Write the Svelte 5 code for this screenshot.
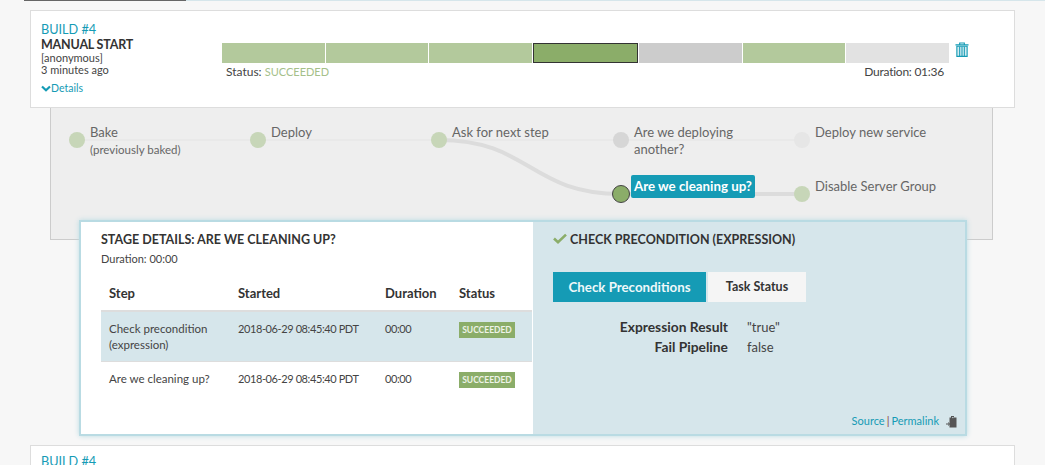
<script lang="ts">
  const segments = [
    { color: '#b3c99c' }, { color: '#b3c99c' }, { color: '#b3c99c' },
    { color: '#8bad69', active: true },
    { color: '#cccccc' }, { color: '#b3c99c' }, { color: '#e2e2e2' }
  ];

  // x/y are the node centres inside the graph panel
  const nodes = [
    { x: 27, y: 32, name: 'Bake', sub: '(previously baked)', tone: 'done' },
    { x: 208, y: 32, name: 'Deploy', tone: 'done' },
    { x: 389, y: 32, name: 'Ask for next step', tone: 'done' },
    { x: 571, y: 32, name: 'Are we deploying another?', tone: 'skip', wrap: true },
    { x: 752, y: 32, name: 'Deploy new service', tone: 'todo' },
    { x: 752, y: 86, name: 'Disable Server Group', tone: 'done' }
  ];

  const steps = [
    { name: 'Check precondition (expression)', started: '2018-06-29 08:45:40 PDT', duration: '00:00', active: true },
    { name: 'Are we cleaning up?', started: '2018-06-29 08:45:40 PDT', duration: '00:00' }
  ];
</script>

<div class="page">
  <div class="strip"><span class="strip-dark"></span><span class="strip-light"></span></div>

  <section class="build">
    <div class="build-info">
      <a class="build-no">BUILD #4</a>
      <div class="trigger">MANUAL START</div>
      <div class="meta">[anonymous]</div>
      <div class="meta">3 minutes ago</div>
      <a class="details">
        <svg width="10" height="7" viewBox="0 0 10 7"><path d="M1 1.5 5 5.3 9 1.5" fill="none" stroke="currentColor" stroke-width="2.2"/></svg>Details
      </a>
    </div>
    <div class="progress">
      <div class="bar">
        {#each segments as s}
          <div class="seg" class:active={s.active} style="background: {s.color}"></div>
        {/each}
      </div>
      <div class="bar-caption">
        <span>Status: <span class="ok">SUCCEEDED</span></span>
        <span class="total">Duration: 01:36</span>
      </div>
    </div>
    <svg class="trash" width="14" height="15" viewBox="0 0 15 16">
      <path d="M0.5 3h14M5 3V1h5v2" fill="none" stroke="#159bb5" stroke-width="1.2"/>
      <path d="M2 4.5h11V15.4H2z" fill="#d3ecf1" stroke="#159bb5" stroke-width="1.2"/>
      <path d="M5 5v10M7.5 5v10M10 5v10" stroke="#159bb5" stroke-width="1.1"/>
    </svg>
  </section>

  <section class="graph">
    <svg class="links" width="943" height="132">
      <path d="M27 32H752" stroke="#e7e7e7" stroke-width="1.5" fill="none"/>
      <path d="M389 32C480 32 480 86 571 86H752" stroke="#dcdcdc" stroke-width="4" fill="none"/>
    </svg>
    {#each nodes as n}
      <span class="dot {n.tone}" style="left: {n.x - 8}px; top: {n.y - 8}px"></span>
      <div class="label" class:wrap={n.wrap} style="left: {n.x + 13}px; top: {n.y - 16}px">
        {n.name}
        {#if n.sub}<small>{n.sub}</small>{/if}
      </div>
    {/each}
    <span class="dot current" style="left: 562px; top: 77px"></span>
    <div class="current-label">Are we cleaning up?</div>
  </section>

  <section class="detail">
    <div class="detail-left">
      <h3>STAGE DETAILS: ARE WE CLEANING UP?</h3>
      <div class="stage-duration">Duration: 00:00</div>
      <table>
        <thead>
          <tr><th class="c1">Step</th><th class="c2">Started</th><th class="c3">Duration</th><th>Status</th></tr>
        </thead>
        <tbody>
          {#each steps as step}
            <tr class:active={step.active}>
              <td>{step.name}</td>
              <td class="nums">{step.started}</td>
              <td class="nums">{step.duration}</td>
              <td><span class="badge">SUCCEEDED</span></td>
            </tr>
          {/each}
        </tbody>
      </table>
    </div>
    <div class="detail-right">
      <h3 class="step-title">
        <svg width="14" height="11" viewBox="0 0 14 11"><path d="M1 5.5 5 9.2 13 1.6" fill="none" stroke="#8bad69" stroke-width="2.6"/></svg>
        CHECK PRECONDITION (EXPRESSION)
      </h3>
      <div class="tabs">
        <div class="tab on">Check Preconditions</div>
        <div class="tab second">Task Status</div>
      </div>
      <dl>
        <dt>Expression Result</dt><dd>"true"</dd>
        <dt>Fail Pipeline</dt><dd>false</dd>
      </dl>
      <div class="links-row">
        <a>Source</a><span class="pipe">|</span><a>Permalink</a>
        <svg width="12" height="13" viewBox="0 0 12 13">
          <path d="M3.5 2.5H5V1h3v1.5h2.5V12.5H3.5z" fill="#555"/>
          <path d="M6 2.6h1.6" stroke="#d6e6eb" stroke-width="0.8"/>
          <path d="M0 9h3.4M2 7.5 3.6 9 2 10.5" fill="none" stroke="#555" stroke-width="1"/>
        </svg>
      </div>
    </div>
  </section>

  <section class="build next">
    <div class="build-info"><a class="build-no">BUILD #4</a></div>
  </section>
</div>

<style>
  :global(body) {
    margin: 0;
    background: #f7f7f7;
  }
  .page {
    height: 465px;
    overflow: hidden;
    font-family: Lato, "Noto Sans", sans-serif;
    font-size: 12px;
    color: #444;
  }
  .strip {
    display: flex;
    height: 1px;
    padding-left: 24px;
  }
  .strip-dark {
    width: 162px;
    background: #666;
  }
  .strip-light {
    flex: 1;
    background: #d6e6eb;
  }
  .build {
    display: flex;
    box-sizing: border-box;
    width: 985px;
    height: 98px;
    margin: 9px 0 0 30px;
    padding: 11px 0 0 10px;
    background: #fff;
    border: 1px solid #ddd;
  }
  .build-info {
    width: 181px;
    flex: none;
    line-height: 14px;
  }
  .build-no {
    display: block;
    font-size: 12.7px;
    line-height: 15px;
    color: #159bb5;
  }
  .trigger {
    font-size: 12.5px;
    line-height: 15px;
    font-weight: 700;
    letter-spacing: -0.2px;
    color: #333;
  }
  .meta {
    font-size: 11px;
    line-height: 12px;
  }
  .details {
    display: block;
    margin-top: 5px;
    font-size: 10.5px;
    color: #159bb5;
  }
  .progress {
    width: 727px;
    margin-top: 21px;
  }
  .bar {
    display: flex;
    height: 20px;
    gap: 1px;
  }
  .seg {
    flex: 1;
    box-sizing: border-box;
  }
  .seg.active {
    border: 1px solid #333;
  }
  .bar-caption {
    display: flex;
    justify-content: space-between;
    padding: 2px 5px 0 4px;
    line-height: 14px;
  }
  .ok {
    font-size: 11px;
    color: #a5c08a;
  }
  .total {
    letter-spacing: -0.25px;
  }
  .trash {
    margin: 20px 0 0 6px;
  }
  .graph {
    position: relative;
    box-sizing: border-box;
    width: 943px;
    height: 132px;
    margin-left: 50px;
    background: #eee;
    border: solid #ccc;
    border-width: 0 1px 1px;
  }
  .links {
    position: absolute;
    left: -1px;
    top: 0;
  }
  .dot {
    position: absolute;
    width: 16px;
    height: 16px;
    margin-left: -1px;
    border-radius: 50%;
  }
  .dot.done { background: #c7d6b8; }
  .dot.skip { background: #d6d6d6; }
  .dot.todo { background: #e6e6e6; }
  .dot.current {
    box-sizing: border-box;
    width: 18px;
    height: 18px;
    background: #8bad69;
    border: 1px solid #444;
  }
  .label {
    position: absolute;
    margin-left: -1px;
    font-size: 13px;
    line-height: 17px;
    color: #666;
    white-space: nowrap;
  }
  .label.wrap {
    width: 120px;
    white-space: normal;
  }
  .label small {
    display: block;
    font-size: 11.5px;
    line-height: 17px;
  }
  .current-label {
    position: absolute;
    left: 580px;
    top: 67px;
    padding: 0 3px;
    height: 23px;
    line-height: 23px;
    border-radius: 2px;
    font-size: 13.3px;
    font-weight: 700;
    color: #fff;
    background: #159bb5;
    white-space: nowrap;
  }
  .detail {
    position: relative;
    display: flex;
    box-sizing: border-box;
    width: 888px;
    height: 216px;
    margin: -20px 0 0 79px;
    border: 2px solid #b9dbe3;
    box-shadow: 0 0 5px #b9dbe3;
  }
  .detail-left {
    box-sizing: border-box;
    width: 452px;
    padding: 9px 0 0 20px;
    background: #fff;
  }
  .detail h3 {
    margin: 0;
    font-size: 12.5px;
    line-height: 17px;
    font-weight: 700;
    color: #333;
  }
  .stage-duration {
    margin-top: 3px;
    font-size: 11px;
    line-height: 16px;
  }
  table {
    width: 431px;
    margin-top: 9px;
    border-collapse: collapse;
    table-layout: fixed;
    font-size: 11.5px;
    line-height: 16px;
  }
  th {
    box-sizing: border-box;
    height: 35px;
    padding: 0 0 1px 8px;
    text-align: left;
    font-size: 13px;
    font-weight: 700;
    color: #333;
    border-bottom: 2px solid #ddd;
  }
  th.c1 { width: 129px; }
  th.c2 { width: 147px; }
  th.c3 { width: 74px; }
  td {
    padding: 9px 0 8px 8px;
    vertical-align: top;
    border-bottom: 1px solid #ddd;
  }
  td.nums {
    font-size: 11px;
    letter-spacing: -0.4px;
    white-space: nowrap;
  }
  tbody tr:last-child td {
    border-bottom: 0;
  }
  tr.active td {
    background: #d6e6eb;
  }
  .badge {
    display: inline-block;
    width: 56px;
    height: 16px;
    font-size: 8.5px;
    line-height: 16px;
    font-weight: 700;
    text-align: center;
    color: #eef3e8;
    background: #8bad69;
  }
  .detail-right {
    position: relative;
    flex: 1;
    padding: 9px 0 0 20px;
    background: #d6e6eb;
  }
  .tabs {
    display: flex;
    gap: 2px;
    margin-top: 24px;
  }
  .tab {
    height: 30px;
    width: 153px;
    text-align: center;
    line-height: 30px;
    font-size: 13.3px;
    font-weight: 700;
    color: #333;
    background: #f5f5f5;
  }
  .tab.second {
    width: 98px;
    font-size: 12.5px;
  }
  .tab.on {
    color: #eef8fa;
    background: #159bb5;
  }
  dl {
    display: grid;
    grid-template-columns: 175px 1fr;
    column-gap: 19px;
    margin: 15px 0 0;
    font-size: 13px;
    line-height: 20px;
  }
  dt {
    text-align: right;
    font-size: 13.8px;
    font-weight: 700;
    color: #333;
  }
  dd {
    margin: 0;
  }
  .links-row {
    position: absolute;
    right: 7px;
    bottom: 6px;
    display: flex;
    align-items: center;
    font-size: 11px;
    line-height: 14px;
    color: #159bb5;
  }
  .pipe {
    margin: 0 2px;
    color: #844;
  }
  .links-row svg {
    margin-left: 7px;
  }
  .build.next {
    height: 40px;
    margin-top: 9px;
    padding-top: 8px;
  }
</style>
